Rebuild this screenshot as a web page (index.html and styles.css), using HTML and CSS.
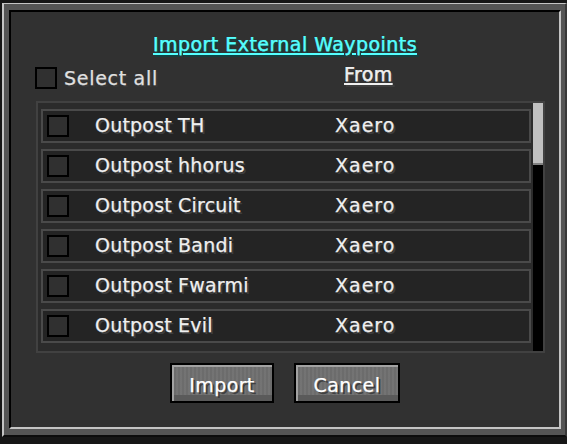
FILE: index.html
```html
<!DOCTYPE html>
<html lang="en">
<head>
<meta charset="utf-8">
<title>Import External Waypoints</title>
<link rel="stylesheet" href="styles.css">
</head>
<body>
<div class="frame">
  <div class="panel">
    <h1 class="title">Import External Waypoints</h1>

    <div class="select-row">
      <label class="select-all"><span class="check"></span><span class="label-text">Select all</span></label>
      <span class="from-head">From</span>
    </div>

    <div class="list">
      <div class="rows">
        <div class="wp-row"><span class="check"></span><span class="wp-name">Outpost TH</span><span class="wp-source">Xaero</span></div>
        <div class="wp-row"><span class="check"></span><span class="wp-name">Outpost hhorus</span><span class="wp-source">Xaero</span></div>
        <div class="wp-row"><span class="check"></span><span class="wp-name">Outpost Circuit</span><span class="wp-source">Xaero</span></div>
        <div class="wp-row"><span class="check"></span><span class="wp-name">Outpost Bandi</span><span class="wp-source">Xaero</span></div>
        <div class="wp-row"><span class="check"></span><span class="wp-name">Outpost Fwarmi</span><span class="wp-source">Xaero</span></div>
        <div class="wp-row"><span class="check"></span><span class="wp-name">Outpost Evil</span><span class="wp-source">Xaero</span></div>
      </div>
      <div class="scrollbar"><div class="thumb"></div></div>
    </div>

    <div class="actions">
      <button class="btn btn-import">Import</button>
      <button class="btn btn-cancel">Cancel</button>
    </div>
  </div>
</div>
</body>
</html>
```

FILE: styles.css
```css
* {
  box-sizing: border-box;
}

html, body {
  margin: 0;
  padding: 0;
}

body {
  width: 567px;
  height: 444px;
  overflow: hidden;
  background: #161616;
  font-family: "DejaVu Sans", "Liberation Sans", sans-serif;
  font-size: 19px;
  line-height: 20px;
  letter-spacing: 0.4px;
  color: #f0f0f0;
  -webkit-text-stroke: 0.25px currentColor;
}

/* Outer raised frame */
.frame {
  margin: 3px 0 0 2px;
  width: 565px;
  height: 434px;
  background: #555555;
  border-top: 1px solid #c4c4c4;
  border-left: 2px solid #c4c4c4;
  border-right: 2px solid #383838;
  border-bottom: 2px solid #0c0c0c;
  padding: 6px 4px 6px 5px;
}

/* Sunken inner panel */
.panel {
  height: 100%;
  background: #313131;
  border-top: 2px solid #000;
  border-left: 2px solid #000;
  border-bottom: 2px solid #c4c4c4;
  border-right: 2px solid #c4c4c4;
  display: flex;
  flex-direction: column;
}

.title {
  margin: 0;
  padding-top: 22px;
  font-size: 19px;
  font-weight: normal;
  line-height: 20px;
  letter-spacing: 0.45px;
  text-align: center;
  color: #55ffff;
  text-decoration: underline;
  text-decoration-thickness: 2px;
  text-underline-offset: 2px;
  text-shadow: 2px 2px 0 #153f3f;
}

.select-row {
  margin-top: 13px;
  height: 22px;
  padding-left: 24px;
  display: flex;
  align-items: center;
}

.select-all {
  flex: 0 0 309px;
  display: flex;
  align-items: center;
  gap: 7px;
  letter-spacing: 0.7px;
  color: #e0e0e0;
  text-shadow: 2px 2px 0 #383838;
}

.from-head {
  align-self: flex-start;
  margin-top: -3px;
  color: #f0f0f0;
  text-decoration: underline;
  text-decoration-thickness: 2px;
  text-underline-offset: 2px;
  text-shadow: 2px 2px 0 #3c3c3c;
}

.check {
  flex: 0 0 22px;
  width: 22px;
  height: 22px;
  border: 2px solid #000;
  background: #303030;
}

/* Waypoint list */
.list {
  margin: 12px 0 0 25px;
  width: 509px;
  height: 252px;
  border: 2px solid #414141;
  background: #2b2b2b;
  display: flex;
  overflow: hidden;
}

.rows {
  flex: 1;
  padding: 6px 2px 0 3px;
  display: flex;
  flex-direction: column;
  gap: 6px;
}

.wp-row {
  flex: 0 0 34px;
  height: 34px;
  border: 2px solid #4a4a4a;
  background: #242424;
  padding-left: 4px;
  display: flex;
  align-items: center;
  text-shadow: 2px 2px 0 #3e3e3e;
}

.wp-name {
  margin: 0 0 3px 26px;
  width: 240px;
  letter-spacing: 0.2px;
  white-space: nowrap;
}

.wp-source {
  margin-bottom: 3px;
  letter-spacing: 1px;
  white-space: nowrap;
}

.scrollbar {
  flex: 0 0 10px;
  background: #000;
}

.thumb {
  height: 62px;
  background: #c0c0c0;
  box-shadow: inset 0 -2px 0 #808080;
}

/* Buttons */
.actions {
  margin-top: 10px;
  display: flex;
  justify-content: center;
  gap: 20px;
}

.btn {
  height: 40px;
  padding: 4px 0 0;
  border: 2px solid #000;
  background:
    repeating-linear-gradient(90deg, rgba(255,255,255,0.03) 0 2px, rgba(0,0,0,0.03) 2px 4px),
    #6f6f6f;
  box-shadow: inset 2px 2px 0 #a2a2a2, inset 0 -6px 0 #5a5a5a;
  font-family: inherit;
  font-size: 19px;
  line-height: 20px;
  letter-spacing: 0.4px;
  color: #ffffff;
  text-shadow: 2px 2px 0 #3f3f3f;
  -webkit-text-stroke: 0.25px currentColor;
  cursor: pointer;
}

.btn-import {
  width: 104px;
}

.btn-cancel {
  width: 106px;
}
```
